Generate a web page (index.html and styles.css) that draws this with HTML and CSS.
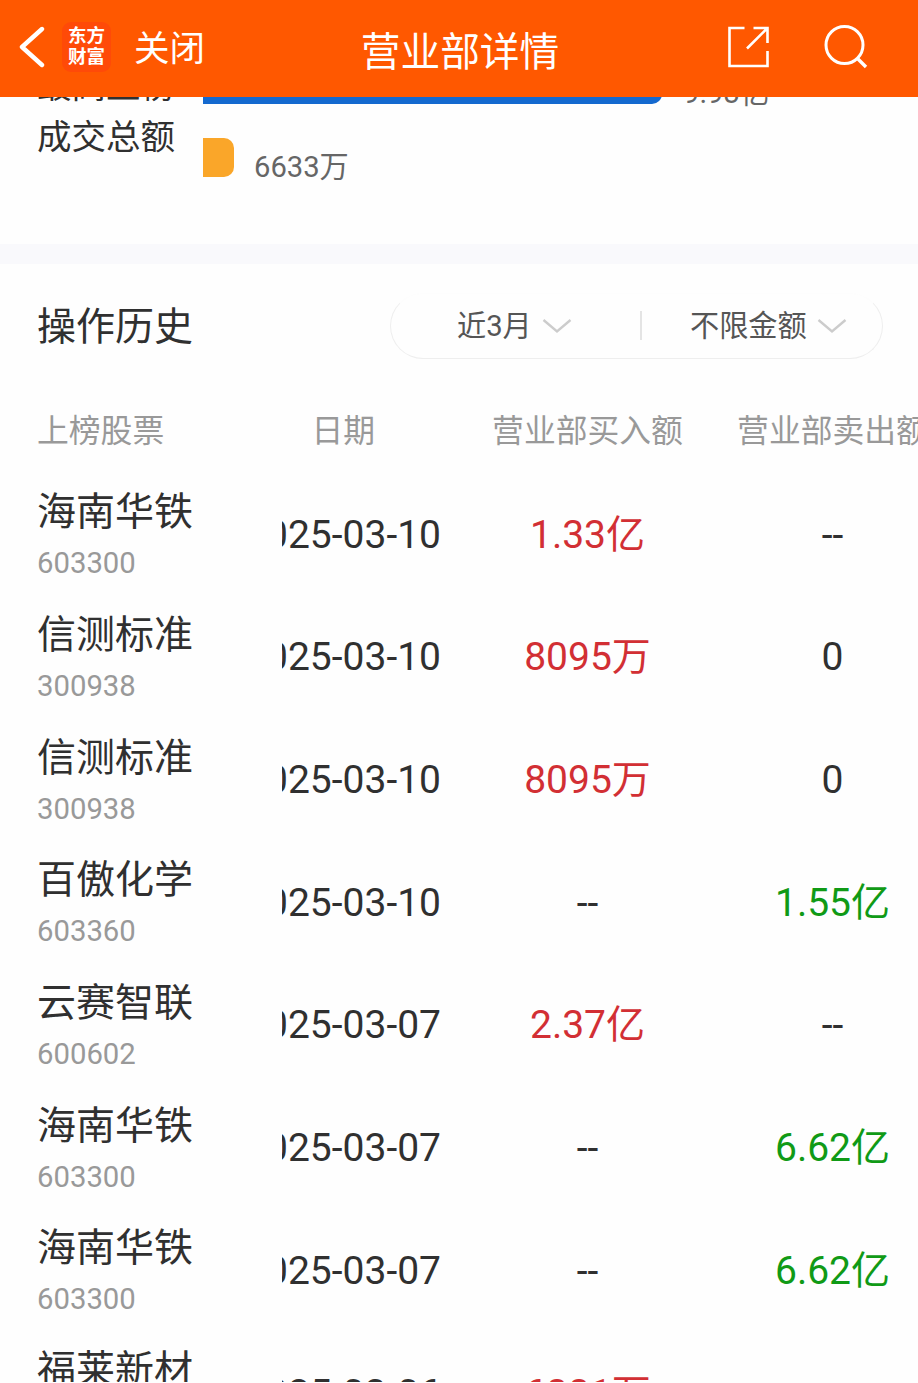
FILE: index.html
```html
<!DOCTYPE html>
<html lang="zh-CN">
<head>
  <meta charset="UTF-8" />
  <meta name="viewport" content="width=device-width, initial-scale=1.0"/>
  <title>营业部详情</title>
  <link rel="stylesheet" href="styles.css">
</head>
<body>
  <header class="topbar">
    <div class="topbar-left">
      <svg class="back" width="26" height="44" viewBox="0 0 26 44"><path d="M23 4L3 22L23 40" fill="none" stroke="#fff" stroke-width="4.4" stroke-linecap="round" stroke-linejoin="round"/></svg>
      <div class="logo"><span>东方</span><span>财富</span></div>
      <span class="close">关闭</span>
    </div>
    <h1>营业部详情</h1>
    <div class="topbar-right">
      <svg width="42" height="44" viewBox="0 0 42 44"><path d="M16.500 3H1.500V41H39.500V26M25.500 3H39.500V18M39 3.500L19 23.500" fill="none" stroke="#fff" stroke-width="2.600"/></svg>
      <svg width="44" height="46" viewBox="0 0 44 46"><circle cx="20.500" cy="21" r="18.500" fill="none" stroke="#fff" stroke-width="3"/><path d="M33 34L42 43" stroke="#fff" stroke-width="3.400"/></svg>
    </div>
  </header>

  <section class="chart">
    <div class="chart-label">最高上榜<br>成交总额</div>
    <div class="chart-bars">
      <div class="bar-row"><div class="bar blue" style="width: 459px"></div><span>9.93亿</span></div>
      <div class="bar-row"><div class="bar orange" style="width: 31px"></div><span>6633万</span></div>
    </div>
  </section>

  <section class="history">
    <div class="history-head">
      <h2>操作历史</h2>
      <div class="filters">
        <div class="filter period">近3月<svg width="30" height="16" viewBox="0 0 30 16"><path d="M1.500 2L15 13.500L28.500 2" fill="none" stroke="#ccc" stroke-width="2.400"/></svg></div>
        <div class="divider"></div>
        <div class="filter amount">不限金额<svg width="30" height="16" viewBox="0 0 30 16"><path d="M1.500 2L15 13.500L28.500 2" fill="none" stroke="#ccc" stroke-width="2.400"/></svg></div>
      </div>
    </div>

    <div class="row head">
      <div class="stock">上榜股票</div>
      <div class="date">日期</div>
      <div class="num">营业部买入额</div>
      <div class="num">营业部卖出额</div>
    </div>
    <div class="row">
      <div class="stock"><div class="name">海南华铁</div><div class="code">603300</div></div>
      <div class="date">2025-03-10</div>
      <div class="num buy">1.33亿</div>
      <div class="num">--</div>
    </div>
    <div class="row">
      <div class="stock"><div class="name">信测标准</div><div class="code">300938</div></div>
      <div class="date">2025-03-10</div>
      <div class="num buy">8095万</div>
      <div class="num">0</div>
    </div>
    <div class="row">
      <div class="stock"><div class="name">信测标准</div><div class="code">300938</div></div>
      <div class="date">2025-03-10</div>
      <div class="num buy">8095万</div>
      <div class="num">0</div>
    </div>
    <div class="row">
      <div class="stock"><div class="name">百傲化学</div><div class="code">603360</div></div>
      <div class="date">2025-03-10</div>
      <div class="num">--</div>
      <div class="num sell">1.55亿</div>
    </div>
    <div class="row">
      <div class="stock"><div class="name">云赛智联</div><div class="code">600602</div></div>
      <div class="date">2025-03-07</div>
      <div class="num buy">2.37亿</div>
      <div class="num">--</div>
    </div>
    <div class="row">
      <div class="stock"><div class="name">海南华铁</div><div class="code">603300</div></div>
      <div class="date">2025-03-07</div>
      <div class="num">--</div>
      <div class="num sell">6.62亿</div>
    </div>
    <div class="row">
      <div class="stock"><div class="name">海南华铁</div><div class="code">603300</div></div>
      <div class="date">2025-03-07</div>
      <div class="num">--</div>
      <div class="num sell">6.62亿</div>
    </div>
    <div class="row last">
      <div class="stock"><div class="name">福莱新材</div></div>
      <div class="date">2025-03-06</div>
      <div class="num buy">6881万</div>
    </div>
  </section>
</body>
</html>
```
FILE: styles.css
```css
* {
  box-sizing: border-box;
}

body {
  margin: 0;
  height: 1383px;
  overflow: hidden;
  background-color: #fefefe;
  color: #303030;
  font-family: Roboto, "Noto Sans CJK SC", sans-serif;
}

h1, h2 {
  margin: 0;
  font-weight: 400;
}

svg {
  display: block;
  flex: none;
}

.topbar {
  height: 97px;
  display: grid;
  grid-template-columns: 320px 280px 1fr;
  background-color: #ff5800;
  color: #fff;
}

.topbar-left {
  display: flex;
  align-items: center;
  padding: 0 0 1px 19px;
}

.back {
  margin-bottom: 3px;
}

.logo {
  width: 49px;
  height: 50px;
  margin-left: 17px;
  border-radius: 9px;
  background-color: #ff4a08;
  display: flex;
  flex-direction: column;
  align-items: center;
  justify-content: center;
  margin-bottom: 2px;
  font-size: 18.5px;
  line-height: 21px;
  font-weight: 700;
}

.close {
  margin: 0 0 5px 23px;
  font-size: 35.5px;
}

.topbar h1 {
  font-size: 39.7px;
  line-height: 105px;
  height: 97px;
  text-align: center;
}

.topbar-right {
  display: flex;
  align-items: center;
  justify-content: flex-end;
  gap: 54px;
  padding: 0 50px 3px 0;
}

.chart {
  height: 147px;
  overflow: hidden;
  display: flex;
  padding-left: 37px;
}

.chart-label {
  width: 166px;
  margin-top: -36px;
  font-size: 34.5px;
  line-height: 51px;
}

.chart-bars {
  margin-top: -32px;
  display: flex;
  flex-direction: column;
  gap: 34px;
}

.bar-row {
  height: 39px;
  display: flex;
  gap: 20px;
  font-size: 29.2px;
  line-height: 59px;
  color: #666;
}

.blue + span {
  line-height: 56px;
  padding-left: 1px;
}

.bar {
  height: 39px;
  border-radius: 0 10px 10px 0;
}

.blue {
  background-color: #1469cf;
}

.orange {
  background-color: #faa629;
}

.history {
  border-top: 20px solid #f9f9fc;
}

.history-head {
  height: 125px;
  padding: 0 35px 2px 37px;
  display: flex;
  align-items: center;
  justify-content: space-between;
}

h2 {
  padding-bottom: 5px;
  font-size: 39px;
}

.filters {
  width: 493px;
  height: 66px;
  display: flex;
  align-items: center;
  border: 1px solid #eee;
  border-top-color: #fdfdfd;
  border-radius: 33px;
  font-size: 29.2px;
  color: #555;
}

.filter {
  display: flex;
  align-items: center;
  gap: 10px;
  padding-bottom: 5px;
}

.filter svg {
  margin-top: 6px;
}

.period {
  width: 249px;
  padding-left: 66px;
}

.amount {
  padding-left: 48px;
}

.divider {
  width: 2px;
  height: 29px;
  background-color: #e4e4e4;
}

.row {
  display: grid;
  grid-template-columns: 282px 183px 245px 245px;
  width: 955px;
  height: 122.65px;
  align-items: center;
  font-size: 39px;
  line-height: 57px;
}

.head {
  height: 85px;
  padding-bottom: 1px;
  font-size: 31.8px;
  color: #999;
}

/* only the top of the last row is in view */
.last {
  height: 50px;
  align-items: start;
  overflow: hidden;
}

.last .stock {
  padding-top: 10px;
}

.last .date,
.last .num {
  margin-top: 34px;
}

.stock {
  padding-left: 37px;
}

.name {
  height: 56px;
  line-height: 56px;
}

.code {
  font-size: 29.3px;
  line-height: 46px;
  color: #999;
}

.date {
  display: flex;
  justify-content: flex-end;
  padding-right: 24px;
  white-space: nowrap;
  overflow: hidden;
}

.head .date {
  padding-right: 90px;
}

.num {
  height: 57px;
  text-align: center;
  white-space: nowrap;
}

.buy {
  color: #d22f34;
}

.sell {
  color: #109a16;
}
```
